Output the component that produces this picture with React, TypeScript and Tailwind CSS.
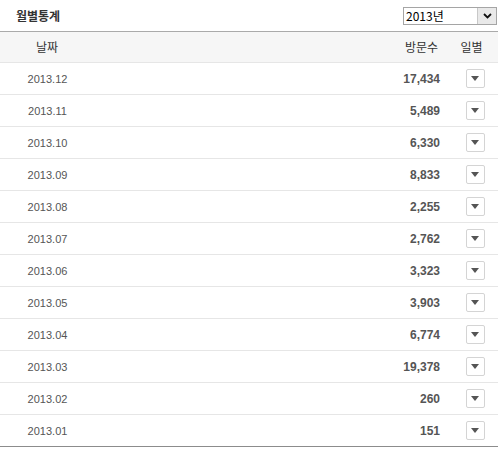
const MONTHS = [
  { month: "2013.12", visits: "17,434" },
  { month: "2013.11", visits: "5,489" },
  { month: "2013.10", visits: "6,330" },
  { month: "2013.09", visits: "8,833" },
  { month: "2013.08", visits: "2,255" },
  { month: "2013.07", visits: "2,762" },
  { month: "2013.06", visits: "3,323" },
  { month: "2013.05", visits: "3,903" },
  { month: "2013.04", visits: "6,774" },
  { month: "2013.03", visits: "19,378" },
  { month: "2013.02", visits: "260" },
  { month: "2013.01", visits: "151" },
];

const KR = "font-['Noto_Sans_CJK_KR',sans-serif]";
const NUM = "font-['Liberation_Sans',Arial,sans-serif]";

function YearSelect() {
  return (
    <div className="flex h-[18px] w-[94px] border border-[#a5a5a5] bg-white">
      <span className={`flex-1 pl-[2px] text-[12px] leading-[16px] text-black ${KR}`}>
        2013년
      </span>
      <span className="flex w-[19px] items-center justify-center border-l border-[#c8c8c8] bg-[#e9e9e9]">
        <svg width="9" height="6" viewBox="0 0 9 6">
          <path d="M1 1 L4.5 4.5 L8 1" fill="none" stroke="#111" strokeWidth="1.8" />
        </svg>
      </span>
    </div>
  );
}

function DayButton() {
  return (
    <button className="flex h-[19px] w-[19px] items-center justify-center rounded-[2px] border border-[#d4d4d4] bg-white">
      <svg width="8" height="5" viewBox="0 0 8 5">
        <path d="M0 0 H8 L4 5 Z" fill="#555" />
      </svg>
    </button>
  );
}

export default function App() {
  return (
    <div className="h-[454px] w-[502px] bg-white">
      <div className="flex h-[31px] items-center justify-between pl-[16px] pr-[5px]">
        <h2 className={`text-[12px] font-bold text-[#333] ${KR}`}>월별통계</h2>
        <YearSelect />
      </div>

      <div className="w-[498px] border-t border-[#aaaaaa]">
        <div className={`flex h-[31px] items-center border-b border-[#e6e6e6] bg-[#f6f6f6] text-[12px] text-[#333] ${KR}`}>
          <span className="w-[94px] text-center">날짜</span>
          <span className="flex-1" />
          <span className="w-[60px] pr-[2px] text-right">방문수</span>
          <span className="w-[58px] pl-[5px] text-center">일별</span>
        </div>

        {MONTHS.map((row, i) => (
          <div
            key={row.month}
            className={`flex h-[32px] items-center border-b ${
              i === MONTHS.length - 1 ? "border-[#8c8c8c]" : "border-[#e6e6e6]"
            }`}
          >
            <span className={`w-[95px] pt-[1px] text-center text-[11px] text-[#555] ${NUM}`}>
              {row.month}
            </span>
            <span className="flex-1" />
            <span className={`w-[60px] pt-[1px] text-right text-[12px] font-bold text-[#555] ${NUM}`}>
              {row.visits}
            </span>
            <span className="flex w-[58px] justify-center pl-[12px]">
              <DayButton />
            </span>
          </div>
        ))}
      </div>
    </div>
  );
}
